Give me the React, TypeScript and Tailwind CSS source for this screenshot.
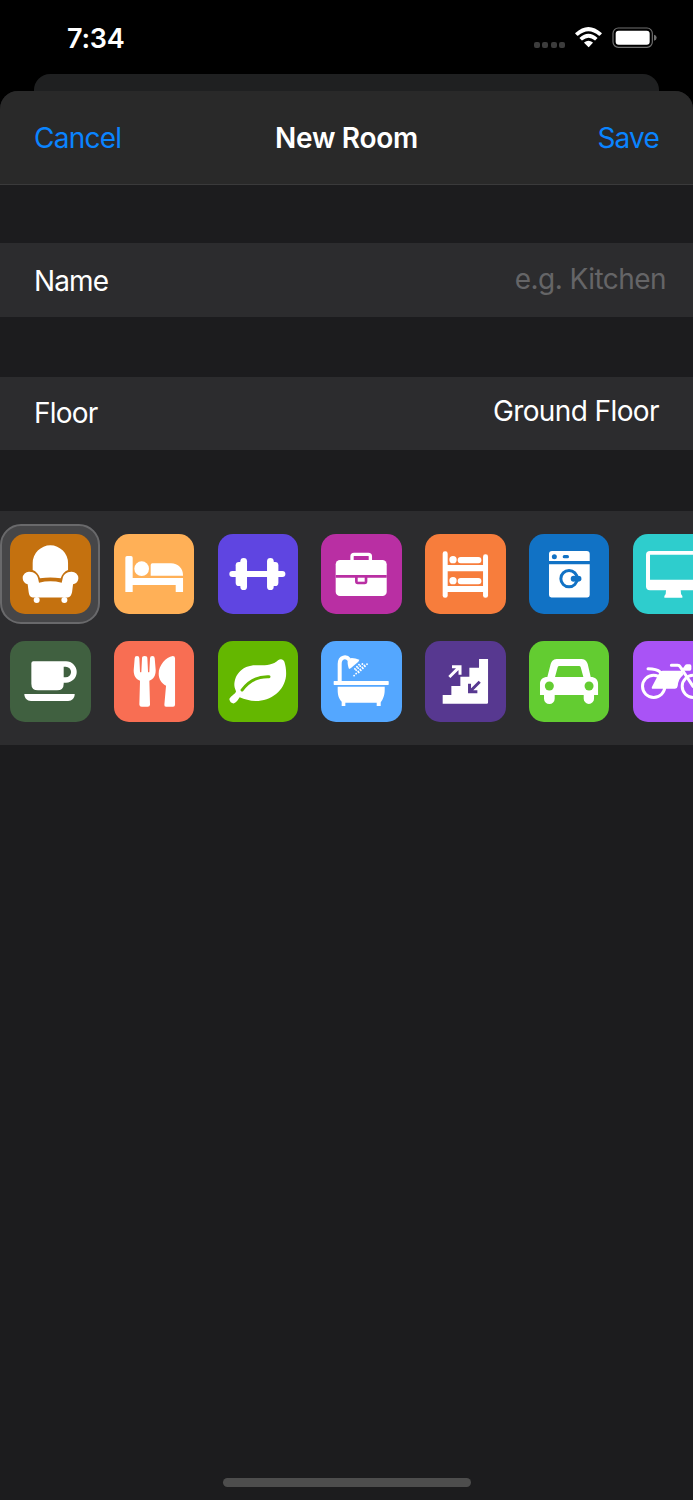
import type { ReactNode } from 'react'

type Room = {
  name: string
  bg: string
  icon: ReactNode
}

const rooms: Room[] = [
  {
    name: 'Living room',
    bg: 'bg-[#c4710f] text-[#c4710f]',
    icon: (
      <>
        <path d="M68 87a53 53 0 0 1 106 0v21c-11 4-18 13-22 25q-31-5-62 0c-4-12-11-21-22-25z" />
        <path d="M38 132a19 19 0 0 1 20-19c15 0 24 9 26 20l3 13q34-8 68 0l3-13c2-11 11-20 26-20a20 20 0 0 1 21 20c0 9-6 16-16 18l-3 24c-2 9-6 15-13 15H68c-7 0-11-6-12-15l-3-24c-9-2-15-10-15-19z" />
        <circle cx="80" cy="198" r="9" />
        <circle cx="163" cy="198" r="9" />
      </>
    ),
  },
  {
    name: 'Bedroom',
    bg: 'bg-[#ffb057] text-[#ffb057]',
    icon: (
      <>
        <path d="M39 66h12q5 0 5 5v61h151v42h-22v-21H56v21H34V71q0-5 5-5z" />
        <circle cx="83" cy="104" r="22" />
        <path d="M115 88h56c21 0 36 15 36 37h-97V93q0-5 5-5z" />
      </>
    ),
  },
  {
    name: 'Gym',
    bg: 'bg-[#5f45e1] text-[#5f45e1]',
    icon: (
      <>
        <rect x="34" y="111" width="168" height="18" rx="9" />
        <rect x="67" y="72" width="20" height="96" rx="10" />
        <rect x="147" y="72" width="20" height="96" rx="10" />
        <rect x="53" y="84" width="24" height="72" rx="10" />
        <rect x="157" y="84" width="24" height="72" rx="10" />
      </>
    ),
  },
  {
    name: 'Office',
    bg: 'bg-[#b92fa3] text-[#b92fa3]',
    icon: (
      <>
        <path d="M93 82V67q0-6 6-6h43q6 0 6 6v15" fill="none" stroke="white" strokeWidth="10" />
        <rect x="44" y="78" width="153" height="108" rx="13" />
        <path d="M44 123h153v8h-58v11q0 9-8 9h-21q-8 0-8-9v-11H44z" fill="currentColor" />
        <path d="M110 131h21v12h-21z" />
      </>
    ),
  },
  {
    name: 'Kids room',
    bg: 'bg-[#f77d3c] text-[#f77d3c]',
    icon: (
      <>
        <rect x="53" y="52" width="15" height="139" rx="7" />
        <rect x="174" y="61" width="15" height="130" rx="7" />
        <path d="M60 93h122v19H60zM60 156h122v18H60z" />
        <circle cx="84" cy="77" r="11" />
        <rect x="98" y="69" width="71" height="19" rx="9" />
        <circle cx="84" cy="140" r="11" />
        <rect x="98" y="132" width="71" height="19" rx="9" />
      </>
    ),
  },
  {
    name: 'Laundry',
    bg: 'bg-[#1172c5] text-[#1172c5]',
    icon: (
      <>
        <path d="M60 81V60q0-9 9-9h104q9 0 9 9v21zM60 91h122v92q0 7-7 7H67q-7 0-7-7z" />
        <g fill="currentColor">
          <circle cx="76" cy="68" r="7.5" />
          <rect x="101" y="63" width="19" height="10" rx="5" />
          <circle cx="134" cy="134" r="9" />
          <rect x="133" y="127" width="24" height="14" rx="5" />
          <circle cx="147" cy="134" r="9" />
        </g>
        <circle cx="120" cy="134" r="24.5" fill="none" stroke="currentColor" strokeWidth="9" />
      </>
    ),
  },
  {
    name: 'Media room',
    bg: 'bg-[#2ecdcd] text-[#2ecdcd]',
    icon: (
      <>
        <rect x="39" y="51" width="163" height="118" rx="12" />
        <path d="M51 62h139v75H51z" fill="currentColor" />
        <path d="M99 168h44l1 12 4 6v5H94v-5l4-6z" />
      </>
    ),
  },
  {
    name: 'Kitchen',
    bg: 'bg-[#406040] text-[#406040]',
    icon: (
      <>
        <path d="M70 61h98a32 32 0 0 1 0 64h-7v3q0 20-20 20H84q-20 0-20-20V67q0-6 6-6z" />
        <path d="M161 77h6a16 16 0 0 1 0 32h-6z" fill="currentColor" />
        <path d="M43 159h151c0 12-8 21-20 21H63c-12 0-20-9-20-21z" />
      </>
    ),
  },
  {
    name: 'Dining room',
    bg: 'bg-[#f86e53] text-[#f86e53]',
    icon: (
      <>
        <path d="M69 45q7 0 7 7l2 40q0 2 2 2t2-2l2-40q0-7 8-7t8 7l2 40q0 2 2 2t2-2l2-40q0-7 7-7t7 7l3 36c0 17-7 27-19 31l2 71q0 7-7 7H83q-7 0-7-7l2-71c-12-4-19-14-19-31l3-36q0-7 7-7z" />
        <path d="M183 52v139q0 6-6 6h-21q-6 0-5-7l5-56c-14-8-22-20-22-36 0-25 22-50 42-53q7 0 7 7z" />
      </>
    ),
  },
  {
    name: 'Garden',
    bg: 'bg-[#64b700] text-[#64b700]',
    icon: (
      <>
        <path d="M180 58c7-6 16-4 19 4 4 13 6 27 5 42-4 44-45 76-91 76-18 0-33-5-48-11-5 7-8 15-18 18-7 0-12-5-13-12 2-9 14-13 20-23 0-4-5-10-5-19 0-34 27-60 63-60 22 0 52 2 68-15z" />
        <path d="M72 147q31-42 81-40" fill="none" stroke="currentColor" strokeWidth="9" strokeLinecap="round" />
      </>
    ),
  },
  {
    name: 'Bathroom',
    bg: 'bg-[#54a7ff] text-[#54a7ff]',
    icon: (
      <>
        <path d="M56 124V69c0-23 20-24 29-13" fill="none" stroke="white" strokeWidth="12" />
        <path d="M80 59q6-8 12-8 11 1 23 5l-3 6-23 20-5 2c-3-9-5-17-4-25z" />
        <g fill="none" stroke="white" strokeWidth="5.5" strokeLinecap="round" strokeDasharray="0.1 8.6">
          <path d="M114 71l-14 14M124 69l-24.500 24.500M130 73l-31 31M138 69.500l-25 25" />
        </g>
        <rect x="38" y="120" width="165" height="12" rx="2" />
        <path d="M50 137h141v9c0 18-6 30-12 38v11h-12v-10H73v10H62v-13c-8-8-12-18-12-36z" />
      </>
    ),
  },
  {
    name: 'Stairs',
    bg: 'bg-[#573890] text-[#573890]',
    icon: (
      <>
        <path d="M53 162h26v-27h27v-28h27V80h29V54h27v130q0 4-4 4H53z" />
        <path d="M73 108l32-32M81 77h24v24" fill="none" stroke="white" strokeWidth="9" />
        <path d="M164 122l-30 30M133.500 128v24H157" fill="none" stroke="currentColor" strokeWidth="9" />
      </>
    ),
  },
  {
    name: 'Garage',
    bg: 'bg-[#63cc31] text-[#63cc31]',
    icon: (
      <>
        <path d="M88 54h65c14 0 19 4 23 15l9 39c13 0 22 8 22 20v34h-12v11a15.500 15.500 0 0 1-31 0v-11H77v11a16 16 0 0 1-32 0v-11H33v-34c0-12 9-20 22-20l10-39c4-11 9-15 23-15z" />
        <g fill="currentColor">
          <path d="M91 75h59q4 0 5 4l8 29H78l8-29q1-4 5-4z" />
          <circle cx="61" cy="135" r="13.500" />
          <circle cx="180" cy="135" r="13.500" />
        </g>
      </>
    ),
  },
  {
    name: 'Bike shed',
    bg: 'bg-[#a953f6] text-[#a953f6]',
    icon: (
      <>
        <g fill="none" stroke="white">
          <circle cx="62" cy="136" r="33.500" strokeWidth="9" />
          <circle cx="181" cy="136" r="33.500" strokeWidth="9" />
          <path d="M45 83c16 0 28 2 37 10M115 73h19q5 0 8 5l38 58" strokeWidth="9" strokeLinecap="round" />
        </g>
        <path d="M79 95q4-6 10-6h58l4 12c-11 9-16 20-17 34q-1 8-8 8H60q-6 0-3-6z" />
        <path d="M143 81l8-1 5-7q2-3 6-3h8q5 0 5 5v9q0 5-5 5h-23z" />
      </>
    ),
  },
]

function StatusBar() {
  return (
    <div className="flex h-[74px] items-start justify-between pr-[36px] pl-[67px]">
      <span className="mt-[22px] text-[27px] leading-[34px] font-semibold tracking-[-0.2px]">7:34</span>
      <div className="mt-[26px] flex">
        <div className="mt-[16px] flex gap-[2.500px]">
          <span className="size-[6px] rounded-[2px] bg-[#3c3c3c]" />
          <span className="size-[6px] rounded-[2px] bg-[#3c3c3c]" />
          <span className="size-[6px] rounded-[2px] bg-[#3c3c3c]" />
          <span className="size-[6px] rounded-[2px] bg-[#3c3c3c]" />
        </div>
        <svg className="ml-[10px] h-[22px] w-[27px]" viewBox="0 0 81 66" fill="white">
          <path d="M1 21Q40-15 80 21q1 1 0 2l-6 6q-1 1-2 0-32-27-63 0-1 1-2 0l-6-6q-1-1 0-2z" />
          <path d="M14 35q26-24 53 0 1 1 0 2l-6 6q-1 1-2 0-18-16-37 0-1 1-2 0l-6-6q-1-1 0-2z" />
          <path d="M28 49q12-10 25 0 1 1 0 2L42 63q-1 1-2 0L28 51q-1-1 0-2z" />
        </svg>
        <svg className="ml-[10px] h-[22px] w-[45px]" viewBox="0 0 135 66">
          <rect x="3" y="6" width="118" height="58" rx="16" fill="none" stroke="#707070" strokeWidth="3.500" />
          <rect x="11" y="14" width="102" height="42" rx="9" fill="white" />
          <path d="M126 26q8 2 8 9t-8 9z" fill="#707070" />
        </svg>
      </div>
    </div>
  )
}

function Header() {
  return (
    <header className="flex h-[94px] items-center justify-between rounded-t-[18px] border-b border-[#3a3a3b] bg-[#292929] px-[34px]">
      <button className="w-[120px] text-left tracking-[-0.75px] text-[#0a84ff]">Cancel</button>
      <h1 className="font-semibold tracking-[-0.3px]">New Room</h1>
      <button className="w-[120px] text-right tracking-[-0.8px] text-[#0a84ff]">Save</button>
    </header>
  )
}

function RoomTile({ room, selected }: { room: Room; selected: boolean }) {
  return (
    <button
      aria-label={room.name}
      className={
        selected
          ? 'flex size-[100px] items-center justify-center rounded-[21px] border-2 border-[#69696b] bg-[#464648]'
          : 'flex size-[100px] items-center justify-center'
      }
    >
      <span className={`size-[80.400px] shrink-0 rounded-[15px] ${room.bg}`}>
        <svg viewBox="0 0 241 241" fill="white" className="size-full">
          {room.icon}
        </svg>
      </span>
    </button>
  )
}

function RoomPicker() {
  return (
    <div className="h-[234px] overflow-hidden bg-[#2c2c2e] pt-[13.200px] pl-[0.400px]">
      <div className="grid w-max grid-cols-7 gap-x-[3.750px] gap-y-[7.200px]">
        {rooms.map((room, i) => (
          <RoomTile key={room.name} room={room} selected={i === 0} />
        ))}
      </div>
    </div>
  )
}

export default function App() {
  return (
    <div className="flex h-[1500px] w-[693px] flex-col overflow-hidden bg-black font-['Inter','Liberation_Sans',sans-serif] text-[28px] leading-[34px] text-white">
      <StatusBar />
      <div className="mx-[34px] h-[34px] shrink-0 rounded-t-[16px] bg-[#1f2021]" />
      <div className="-mt-[17px] flex flex-1 flex-col rounded-t-[18px] bg-[#1c1c1e]">
        <Header />
        <div className="mt-[58px] flex h-[74px] items-center justify-between bg-[#2c2c2e] pr-[27px] pl-[34px]">
          <span className="mt-[2px] tracking-[-0.85px]">Name</span>
          <span className="mb-[3px] tracking-[-0.55px] text-[#656567]">e.g. Kitchen</span>
        </div>
        <div className="mt-[60px] flex h-[73px] items-center justify-between bg-[#2c2c2e] px-[34px]">
          <span className="mb-[2px] tracking-[-0.8px]">Floor</span>
          <span className="mb-[5px] tracking-[-0.6px]">Ground Floor</span>
        </div>
        <div className="mt-[61px]">
          <RoomPicker />
        </div>
        <div className="mx-auto mt-auto mb-[13px] h-[9px] w-[248px] rounded-full bg-[#4d4d4d]" />
      </div>
    </div>
  )
}
